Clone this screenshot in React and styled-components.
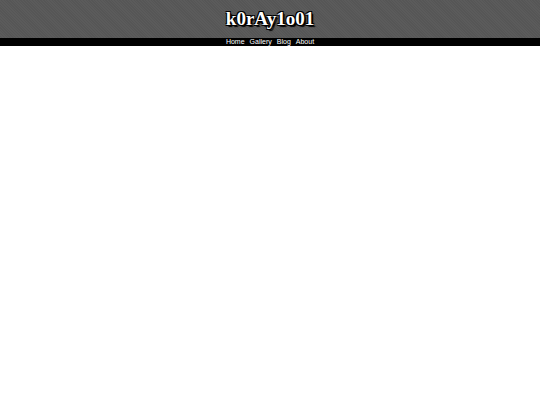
import React from 'react';
import styled, { createGlobalStyle } from 'styled-components';

const GlobalStyle = createGlobalStyle`
  html, body {
    margin: 0;
    padding: 0;
    background: #ffffff;
  }
`;

const App = () => {
  return (
    <>
      <GlobalStyle />
      <Header>
        <Title>k0rAy1o01</Title>
      </Header>
      <NavBar>
        <NavLink href="#">Home</NavLink>
        <NavLink href="#">Gallery</NavLink>
        <NavLink href="#">Blog</NavLink>
        <NavLink href="#">About</NavLink>
      </NavBar>
    </>
  );
};

// Styled Components
const Header = styled.header`
  height: 38px;
  display: flex;
  align-items: center;
  justify-content: center;
  background-color: #565656;
  background-image: repeating-linear-gradient(
    45deg,
    rgba(255, 255, 255, 0.03) 0px,
    rgba(255, 255, 255, 0.03) 1px,
    transparent 1px,
    transparent 2px
  );
`;

const Title = styled.h1`
  margin: 0;
  font-family: "Liberation Serif", "Times New Roman", serif;
  font-weight: bold;
  font-size: 19px;
  color: #ffffff;
  text-shadow: -1px -1px 0 #000, 1px -1px 0 #000, -1px 1px 0 #000, 1px 1px 0 #000, 2px 2px 1px #000;
`;

const NavBar = styled.nav`
  height: 8px;
  background: #000000;
  display: flex;
  justify-content: center;
  align-items: center;
  gap: 5px;
`;

const NavLink = styled.a`
  font-family: "Liberation Sans", Arial, sans-serif;
  font-size: 7px;
  line-height: 8px;
  color: #ffffff;
  text-decoration: none;
`;

export default App;
